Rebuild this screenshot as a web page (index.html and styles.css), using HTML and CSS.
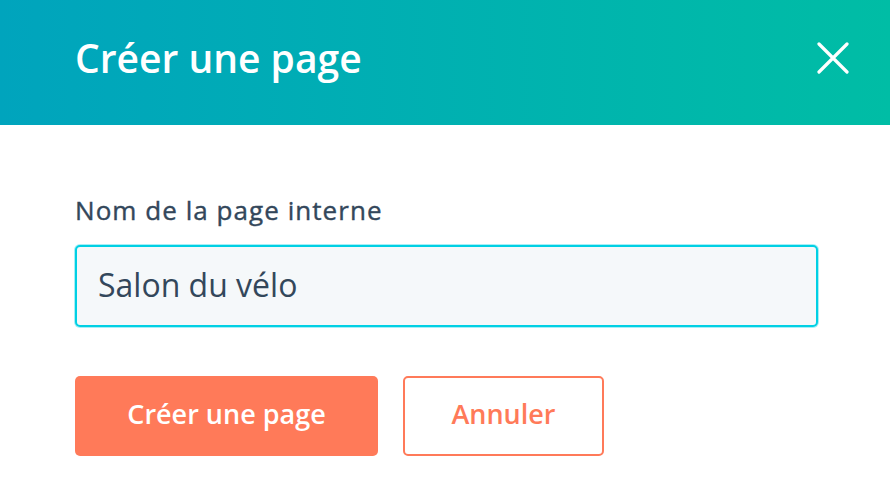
FILE: index.html
```html
<!DOCTYPE html>
<html lang="fr">
<head>
<meta charset="utf-8">
<title>Créer une page</title>
<link rel="stylesheet" href="styles.css">
</head>
<body>
<div class="modal">
  <header class="modal-header">
    <h1 class="modal-title">Créer une page</h1>
    <button class="close" aria-label="Fermer">
      <svg width="32" height="32" viewBox="0 0 32 32"><path d="M2 2 L30 30 M30 2 L2 30" stroke="#fff" stroke-width="3.2" stroke-linecap="round"/></svg>
    </button>
  </header>
  <main class="modal-body">
    <label class="field-label" for="name">Nom de la page interne</label>
    <div class="input" id="name">Salon du vélo</div>
    <div class="actions">
      <button class="btn btn-primary">Créer une page</button>
      <button class="btn btn-secondary">Annuler</button>
    </div>
  </main>
</div>
</body>
</html>
```
FILE: styles.css
```css
html, body {
  margin: 0;
  padding: 0;
  background: #fff;
}
body {
  font-family: "Open Sans", Lato, sans-serif;
  color: #33475b;
}
.modal {
  width: 890px;
  height: 504px;
}
.modal-header {
  height: 125px;
  box-sizing: border-box;
  padding: 38px 41px 0 75px;
  display: flex;
  align-items: flex-start;
  justify-content: space-between;
  background: linear-gradient(to right, #00a4bd, #00bda5);
}
.modal-title {
  margin: 0;
  color: #fff;
  font-size: 39px;
  line-height: 39px;
  font-weight: 600;
}
.close {
  background: none;
  border: 0;
  padding: 0;
  width: 32px;
  height: 32px;
  display: flex;
  margin-top: 4px;
}
.modal-body {
  padding: 72px 72px 0 75px;
}
.field-label {
  display: block;
  font-size: 26px;
  line-height: 26px;
  font-weight: 500;
  letter-spacing: 1.05px;
  -webkit-text-stroke: 0.4px #33475b;
  margin: 0 0 22px 0;
}
.input {
  height: 82px;
  box-sizing: border-box;
  border: 2px solid #00d0e4;
  box-shadow: 0 0 0 1px rgba(0, 208, 228, 0.35);
  border-radius: 5px;
  background: #f5f8fa;
  padding: 0 20px 2px 21px;
  display: flex;
  align-items: center;
  font-size: 32px;
  line-height: 1;
}
.actions {
  display: flex;
  gap: 25px;
  margin-top: 49px;
}
.btn {
  height: 80px;
  box-sizing: border-box;
  border-radius: 5px;
  font-family: inherit;
  font-size: 27px;
  line-height: 1;
  font-weight: 600;
  padding: 0 0 6px 0;
  cursor: pointer;
}
.btn-primary {
  width: 303px;
  background: #ff7a59;
  border: 0;
  color: #fff;
}
.btn-secondary {
  width: 201px;
  background: #fff;
  border: 2px solid #ff7a59;
  color: #ff7a59;
}
```
